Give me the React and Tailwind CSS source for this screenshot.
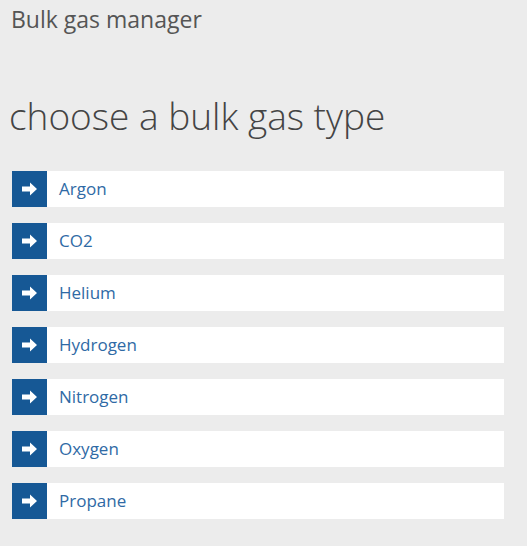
const gases = ['Argon', 'CO2', 'Helium', 'Hydrogen', 'Nitrogen', 'Oxygen', 'Propane'];

function ArrowIcon() {
  return (
    <svg width="17" height="14" viewBox="0 0 17 14" fill="#fff">
      <path d="M1 4.5h8V0.5L16 7l-7 6.5V9.5H1z" />
    </svg>
  );
}

export default function App() {
  return (
    <div className="h-[546px] w-[527px] bg-[#ececec] font-['Open_Sans',sans-serif]">
      <h1 className="pl-[11px] pt-[3px] text-[23px] leading-[32px] text-[#555]">Bulk gas manager</h1>
      <h2 className="mt-[57px] pl-[9px] text-[37px] font-light leading-[48px] text-[#444]">choose a bulk gas type</h2>
      <ul className="mt-[31px] flex flex-col gap-[16px] pl-[12px] pr-[23px]">
        {gases.map((gas) => (
          <li key={gas} className="flex h-[36px] items-stretch bg-white">
            <div className="flex w-[35px] items-center justify-center bg-[#165895]">
              <ArrowIcon />
            </div>
            <span className="flex items-center pl-[12px] text-[17px] text-[#2f6aa5]">{gas}</span>
          </li>
        ))}
      </ul>
    </div>
  );
}
